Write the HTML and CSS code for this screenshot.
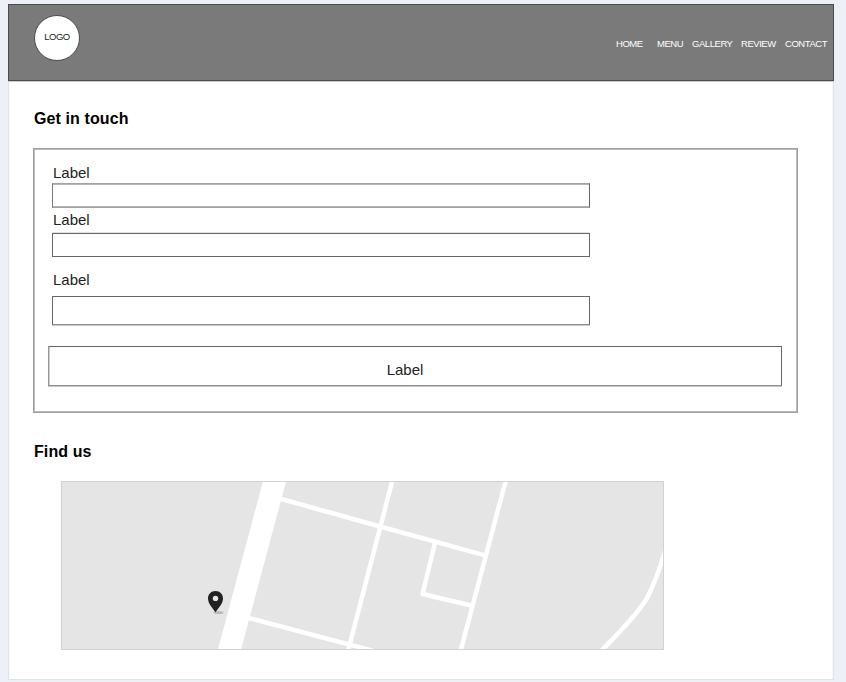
FILE: index.html
```html
<!DOCTYPE html>
<html lang="en">
<head>
<meta charset="utf-8">
<title>Contact</title>
<link rel="stylesheet" href="styles.css">
</head>
<body>
<div class="page">
  <header class="header">
    <div class="logo">LOGO</div>
    <nav class="nav">
      <a class="home">HOME</a>
      <a class="menu">MENU</a>
      <a class="gallery">GALLERY</a>
      <a class="review">REVIEW</a>
      <a class="contact">CONTACT</a>
    </nav>
  </header>
  <main class="main">
    <h2>Get in touch</h2>
    <form class="form">
      <label for="f1">Label</label>
      <input id="f1" class="field first" type="text">
      <label for="f2">Label</label>
      <input id="f2" class="field second" type="text">
      <label for="f3" class="spaced">Label</label>
      <input id="f3" class="field third" type="text">
      <button class="submit" type="button">Label</button>
    </form>
    <h2 class="find">Find us</h2>
    <svg class="map" width="603" height="169" viewBox="61 481 603 169">
      <rect x="61" y="481" width="603" height="169" fill="#e5e5e5"/>
      <g fill="none" stroke="#fff" stroke-width="4.5">
        <path d="M276 476 228 655" stroke-width="22.3"/>
        <path d="M276 497.500 380 526.500 485 555.300"/>
        <path d="M393.500 476 347 655"/>
        <path d="M507 476 459.500 655"/>
        <path d="M435 543 422.500 594 471 605.500" stroke-linejoin="round"/>
        <path d="M245 617 385 654"/>
        <path d="M668 541C661 566 655 583 646.500 599C638 613 620 632 600 652"/>
      </g>
      <rect x="61.500" y="481.500" width="602" height="168" fill="none" stroke="#d2d2d2"/>
      <ellipse cx="218.500" cy="612.400" rx="5" ry="1.500" fill="#bbb"/>
      <path fill="#222" fill-rule="evenodd" d="M215.500 591C211 591 208 594.200 208 598.500C208 603.500 212.500 608 215.500 612.300C218.500 608 223 603.500 223 598.500C223 594.200 220 591 215.500 591ZM215.500 595.700A2.700 2.700 0 1 1 215.500 601.100A2.700 2.700 0 1 1 215.500 595.700Z"/>
    </svg>
  </main>
</div>
</body>
</html>
```
FILE: styles.css
```css
* { box-sizing: border-box; }
html { overflow: hidden; }
body {
  margin: 0;
  padding: 4px 12px 2px 8px;
  background: #edf0f6;
  color: #222;
  font-family: "Liberation Sans", Arial, sans-serif;
}
.page {
  width: 826px;
  height: 676px;
  background: #fff;
  border: solid #dfe4e9;
  border-width: 0 1px 1px;
  box-shadow: inset 1px 0 #fafafa, inset -1px 0 #f7f9f9;
}
.header {
  display: flex;
  justify-content: space-between;
  height: 77px;
  margin: 0 -1px;
  padding: 10px 5px 0 25px;
  background: #7a7a7a;
  border: 1px solid #4b4b4b;
  box-shadow: 0 1px #ccc;
}
.logo {
  width: 46px;
  height: 46px;
  border: 1px solid #4b4b4b;
  border-radius: 50%;
  background: #fff;
  font-size: 9.5px;
  letter-spacing: -0.5px;
  line-height: 41px;
  text-align: center;
}
.nav {
  display: flex;
  margin-top: 24px;
  color: #fff;
  font-size: 9.5px;
  line-height: 10px;
  height: 10px;
}
.nav a { white-space: nowrap; letter-spacing: -0.45px; }
.home { width: 41px; }
.menu { width: 35px; }
.gallery { width: 49px; }
.review { width: 44px; }
.contact { width: 43px; }
.main { padding: 29px 0 0 25px; }
h2 {
  margin: 0;
  color: #000;
  font-size: 16px;
  line-height: 18px;
  letter-spacing: 0.1px;
}
.form {
  display: flex;
  flex-direction: column;
  width: 765px;
  height: 265px;
  margin: 20px 0 0 -1px;
  padding: 15px 15px 0 14px;
  border: 1px solid #a0a0a0;
  box-shadow: inset 0 0 0 1px #bababa;
}
label {
  height: 19px;
  padding-left: 5px;
  font-size: 15px;
  line-height: 18px;
}
.field {
  width: 538px;
  margin: 0 0 0 4px;
  padding: 0 6px;
  border: 1px solid #686868;
  border-radius: 0;
  outline: 0;
  background: #fff;
  font: inherit;
}
.first {
  height: 25px;
  margin-bottom: 3px;
  border-color: #a3a3a3 #666 #a3a3a3 #7c7c7c;
  box-shadow: inset 0 1px #b5b5b5, inset 0 -1px #b5b5b5;
}
.second { height: 24px; margin-top: 3px; box-shadow: 0 -1px #e2e2e2; }
.spaced { margin-top: 14px; }
.third {
  height: 29px;
  margin-top: 6px;
  border-bottom-color: #8f8f8f;
  box-shadow: 0 1px #c9c9c9;
}
.submit {
  width: 734px;
  height: 40px;
  margin: 21px 0 0;
  padding: 6px 20px 0 0;
  border: 1px solid #686868;
  border-left-color: #999;
  border-bottom-color: #8f8f8f;
  border-radius: 0;
  background: #fff;
  box-shadow: 0 1px #c9c9c9, inset 1px 0 #ccc;
  color: #222;
  font: 15px "Liberation Sans", Arial, sans-serif;
}
.find { margin-top: 30px; }
.map { display: block; margin: 20px 0 0 27px; }
```
